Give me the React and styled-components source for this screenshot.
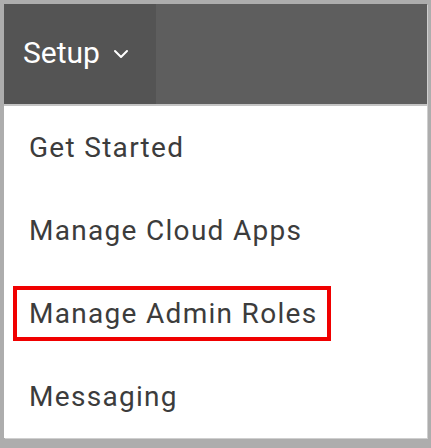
import React from 'react';
import styled, {createGlobalStyle} from 'styled-components';

const GlobalStyle = createGlobalStyle`
  html, body {
    margin: 0;
    padding: 0;
    background: #adadad;
  }
  body {
    font-family: Roboto, "Liberation Sans", sans-serif;
  }
`;

const Frame = styled.div`
  width: 431px;
  height: 448px;
  box-sizing: border-box;
  padding: 4px 4px 10px 4px;
  background: #adadad;
`;

const Panel = styled.div`
  height: 100%;
  display: flex;
  flex-direction: column;
  background: #fff;
  box-shadow: 1px 1px 0 #cfcfcf;
`;

const NavBar = styled.div`
  height: 100px;
  display: flex;
  background: #5e5e5e;
  border-bottom: 2px solid #c4c4c4;
`;

const NavButton = styled.div`
  width: 152px;
  box-sizing: border-box;
  padding: 0 0 4px 19px;
  display: flex;
  align-items: center;
  gap: 13px;
  background: #545454;
  color: #fff;
  font-size: 30px;
`;

const Menu = styled.ul`
  list-style: none;
  margin: 0;
  padding: 0 0 0 9px;
`;

const MenuItem = styled.li`
  height: 83px;
  display: flex;
  align-items: center;
  font-size: 28px;
  color: #3c3c3c;
  letter-spacing: 1.3px;
`;

const Label = styled.span`
  display: inline-block;
  line-height: 47px;
  padding: 0 10px 0 12px;
  border: 4px solid ${p => (p.$highlight ? '#f00000' : 'transparent')};
`;

const Chevron = () => (
  <svg width="16" height="10" viewBox="0 0 16 10" style={{marginTop: 4}}>
    <polyline points="2,2 8,8 14,2" fill="none" stroke="#fff" strokeWidth="2" strokeLinecap="round" strokeLinejoin="round" />
  </svg>
);

const items = ['Get Started', 'Manage Cloud Apps', 'Manage Admin Roles', 'Messaging'];

const App = () => {
  return (
    <>
      <GlobalStyle />
      <Frame>
        <Panel>
          <NavBar>
            <NavButton>
              Setup
              <Chevron />
            </NavButton>
          </NavBar>
          <Menu>
            {items.map(item => (
              <MenuItem key={item}>
                <Label $highlight={item === 'Manage Admin Roles'}>{item}</Label>
              </MenuItem>
            ))}
          </Menu>
        </Panel>
      </Frame>
    </>
  );
};

export default App;
